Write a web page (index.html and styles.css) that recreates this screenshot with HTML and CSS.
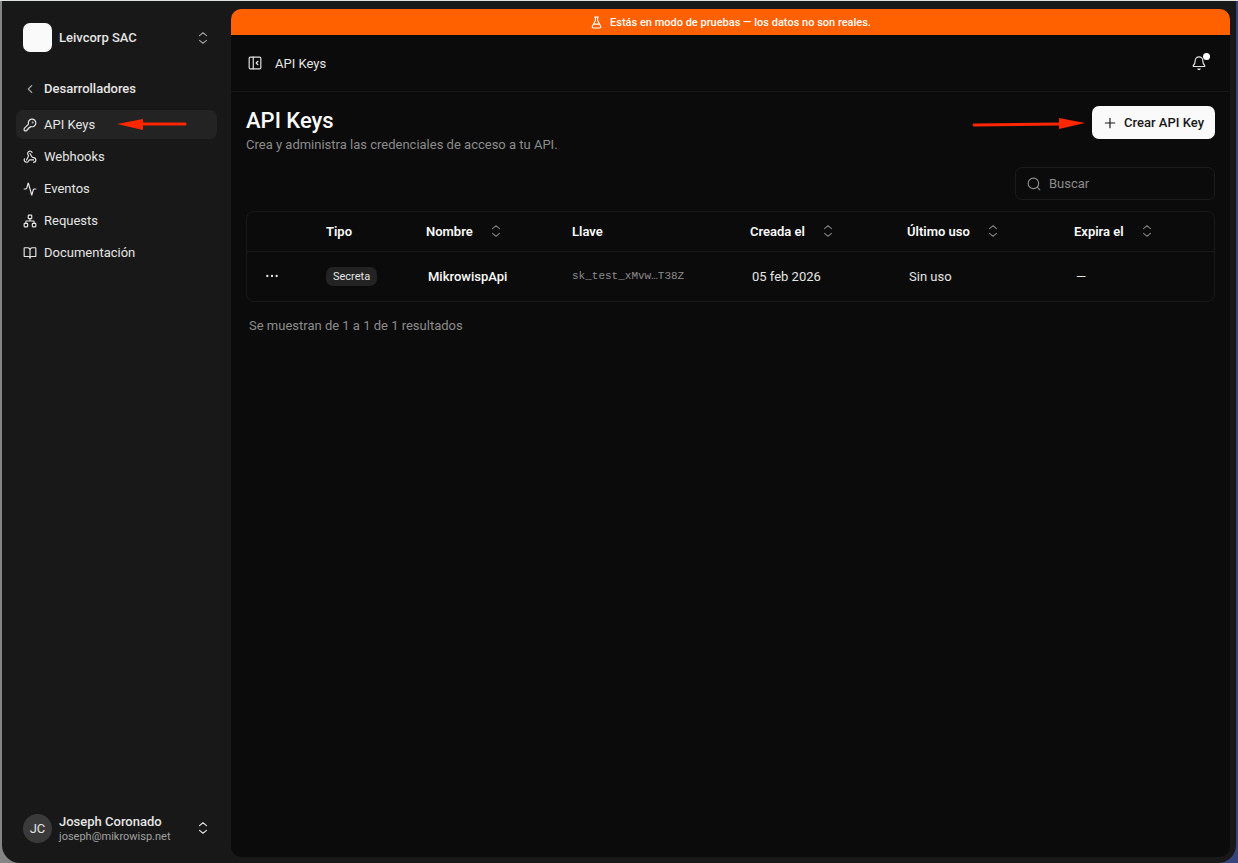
FILE: index.html
```
<!DOCTYPE html>
<html lang="es">
<head>
    <meta charset="UTF-8">
    <meta name="viewport" content="width=device-width, initial-scale=1.0">
    <title>API Keys</title>
    <link rel="stylesheet" href="styles.css">
</head>
<body>
    <!-- Shared icons -->
    <svg class="sprite" aria-hidden="true">
        <symbol id="sort" viewBox="0 0 24 24"><path d="m6 16 6 5 6-5M6 8l6-5 6 5"/></symbol>
    </svg>

    <div class="app">
        <aside class="sidebar">
            <button class="account" type="button">
                <span class="logo"></span>
                <span class="account-name">Leivcorp SAC</span>
                <svg class="icon muted"><use href="#sort"/></svg>
            </button>

            <a class="back" href="#">
                <svg class="icon muted" viewBox="0 0 24 24"><path d="m15 18-6-6 6-6"/></svg>
                Desarrolladores
            </a>

            <nav class="nav">
                <a class="nav-item active" href="#">
                    <svg class="icon" viewBox="0 0 24 24"><path d="M2.586 17.414A2 2 0 0 0 2 18.828V21a1 1 0 0 0 1 1h3a1 1 0 0 0 1-1v-1a1 1 0 0 1 1-1h1a1 1 0 0 0 1-1v-1a1 1 0 0 1 1-1h.172a2 2 0 0 0 1.414-.586l.814-.814a6.5 6.5 0 1 0-4-4z"/><circle cx="16.5" cy="7.5" r=".5"/></svg>
                    API Keys
                    <svg class="arrow arrow-left" viewBox="0 0 70 12"><path class="line" d="M26 6h42"/><path class="head" d="M0 6 26 1v11z"/></svg>
                </a>
                <a class="nav-item" href="#">
                    <svg class="icon" viewBox="0 0 24 24"><path d="M18 16.98h-5.99c-1.1 0-1.95.94-2.48 1.9A4 4 0 0 1 2 17c.01-.7.2-1.4.57-2"/><path d="m6 17 3.13-5.78c.53-.97.1-2.18-.5-3.1a4 4 0 1 1 6.89-4.06"/><path d="m12 6 3.13 5.73C15.66 12.7 16.9 13 18 13a4 4 0 0 1 0 8"/></svg>
                    Webhooks
                </a>
                <a class="nav-item" href="#">
                    <svg class="icon" viewBox="0 0 24 24"><path d="M22 12h-2.48a2 2 0 0 0-1.93 1.46l-2.35 8.36a.25.25 0 0 1-.48 0L9.24 2.18a.25.25 0 0 0-.48 0l-2.35 8.36A2 2 0 0 1 4.49 12H2"/></svg>
                    Eventos
                </a>
                <a class="nav-item" href="#">
                    <svg class="icon" viewBox="0 0 24 24"><rect x="16" y="16" width="6" height="6" rx="1"/><rect x="2" y="16" width="6" height="6" rx="1"/><rect x="9" y="2" width="6" height="6" rx="1"/><path d="M5 16v-3a1 1 0 0 1 1-1h12a1 1 0 0 1 1 1v3M12 12V8"/></svg>
                    Requests
                </a>
                <a class="nav-item" href="#">
                    <svg class="icon" viewBox="0 0 24 24"><path d="M12 7v14M3 18a1 1 0 0 1-1-1V4a1 1 0 0 1 1-1h5a4 4 0 0 1 4 4 4 4 0 0 1 4-4h5a1 1 0 0 1 1 1v13a1 1 0 0 1-1 1h-6a3 3 0 0 0-3 3 3 3 0 0 0-3-3z"/></svg>
                    Documentación
                </a>
            </nav>

            <button class="account user" type="button">
                <span class="avatar">JC</span>
                <span class="account-name">Joseph Coronado<small>joseph@mikrowisp.net</small></span>
                <svg class="icon"><use href="#sort"/></svg>
            </button>
        </aside>

        <main class="panel">
            <div class="banner">
                <svg class="icon" viewBox="0 0 24 24"><path d="M14 2v6a2 2 0 0 0 .245.96l5.51 10.08A2 2 0 0 1 18 22H6a2 2 0 0 1-1.755-2.96l5.51-10.08A2 2 0 0 0 10 8V2M6.453 15h11.094M8.5 2h7"/></svg>
                Estás en modo de pruebas — los datos no son reales.
            </div>

            <header class="topbar">
                <button class="icon-btn" type="button" aria-label="Contraer menú">
                    <svg class="icon" viewBox="0 0 24 24"><rect x="2" y="2" width="20" height="20" rx="2"/><path d="M9 2v20M17 15l-3-3 3-3"/></svg>
                </button>
                <span>API Keys</span>
                <button class="icon-btn bell" type="button" aria-label="Notificaciones">
                    <svg class="icon" viewBox="0 0 24 24"><path d="M10.268 22a2 2 0 0 0 3.464 0M2.262 16.326A1 1 0 0 0 3 18h18a1 1 0 0 0 .74-1.673C20.41 14.956 18.500 13 18.500 8A6.500 6.500 0 0 0 5.500 8c0 5-1.911 6.956-3.238 8.326"/></svg>
                    <span class="dot"></span>
                </button>
            </header>

            <section class="content">
                <div class="heading">
                    <div>
                        <h1>API Keys</h1>
                        <p>Crea y administra las credenciales de acceso a tu API.</p>
                    </div>
                    <div class="create">
                        <svg class="arrow arrow-right" viewBox="0 0 113 12"><path class="line" d="m2 7 86-1"/><path class="head" d="M113 5 87 0v11z"/></svg>
                        <button class="create-btn" type="button">
                            <svg class="icon" viewBox="0 0 24 24"><path d="M4 12h16M12 4v16"/></svg>
                            Crear API Key
                        </button>
                    </div>
                </div>

                <label class="search">
                    <svg class="icon" viewBox="0 0 24 24"><circle cx="11" cy="11" r="9"/><path d="m22 22-4.6-4.6"/></svg>
                    <input type="search" placeholder="Buscar" aria-label="Buscar">
                </label>

                <div class="table-box">
                    <table>
                        <colgroup>
                            <col class="col-menu">
                            <col class="col-type">
                            <col class="col-name">
                            <col class="col-key">
                            <col class="col-created">
                            <col class="col-used">
                            <col class="col-expires">
                        </colgroup>
                        <thead>
                            <tr>
                                <th></th>
                                <th>Tipo</th>
                                <th><button class="sort-btn" type="button">Nombre <svg class="icon"><use href="#sort"/></svg></button></th>
                                <th>Llave</th>
                                <th><button class="sort-btn" type="button">Creada el <svg class="icon"><use href="#sort"/></svg></button></th>
                                <th><button class="sort-btn" type="button">Último uso <svg class="icon"><use href="#sort"/></svg></button></th>
                                <th><button class="sort-btn" type="button">Expira el <svg class="icon"><use href="#sort"/></svg></button></th>
                            </tr>
                        </thead>
                        <tbody>
                            <tr>
                                <td class="menu-cell">
                                    <button class="icon-btn" type="button" aria-label="Acciones">
                                        <svg class="icon" viewBox="0 0 24 24"><circle cx="4" cy="12" r="1"/><circle cx="12" cy="12" r="1"/><circle cx="20" cy="12" r="1"/></svg>
                                    </button>
                                </td>
                                <td><span class="badge">Secreta</span></td>
                                <td class="value name">MikrowispApi</td>
                                <td class="key">sk_test_xMvw…T38Z</td>
                                <td class="value">05 feb 2026</td>
                                <td class="value">Sin uso</td>
                                <td class="value">—</td>
                            </tr>
                        </tbody>
                    </table>
                </div>

                <p class="summary">Se muestran de 1 a 1 de 1 resultados</p>
            </section>
        </main>
    </div>
</body>
</html>
```
FILE: styles.css
```
/* Base styles */
* {
    box-sizing: border-box;
}

body {
    margin: 0;
    padding: 0 2px;
    height: 100vh;
    border-top: 1px solid #dfe3e1;
    background: linear-gradient(90deg, #858585, #4b5052 40%, #303040 60%, #35457c);
    font-family: Roboto, "Liberation Sans", sans-serif;
    font-size: 13px;
    line-height: 17px;
    color: #e5e5e5;
}

h1, p {
    margin: 0;
}

a {
    color: inherit;
    text-decoration: none;
}

button {
    padding: 0;
    border: 0;
    background: none;
    font: inherit;
    color: inherit;
    text-align: left;
    cursor: pointer;
}

.sprite {
    position: absolute;
    width: 0;
    height: 0;
}

.icon {
    width: 14px;
    height: 14px;
    flex: none;
    fill: none;
    stroke: currentColor;
    stroke-width: 2;
    stroke-linecap: round;
    stroke-linejoin: round;
}

.muted {
    color: #a1a1a1;
}

.app {
    display: flex;
    height: 100%;
    padding: 8px 6px 6px 0;
    background: #181818;
    border-radius: 0 0 18px 18px;
}

/* Sidebar */
.sidebar {
    display: flex;
    flex-direction: column;
    flex: none;
    width: 229px;
    padding: 14px;
}

.account {
    display: flex;
    align-items: center;
    gap: 7px;
    padding: 0 7px;
    font-weight: 500;
}

.account-name {
    flex: 1;
}

.account-name small {
    display: block;
    font-size: 11px;
    line-height: 13px;
    font-weight: 400;
    color: #a1a1a1;
}

.logo, .avatar {
    width: 29px;
    height: 29px;
    border-radius: 7px;
    background: #fafafa;
}

.avatar {
    display: flex;
    align-items: center;
    justify-content: center;
    border-radius: 50%;
    background: #3a3a3a;
    font-weight: 400;
}

.user {
    margin-top: auto;
}

.back {
    display: flex;
    align-items: center;
    gap: 7px;
    margin-top: 28px;
    padding: 0 7px;
    font-weight: 500;
}

.nav {
    display: flex;
    flex-direction: column;
    gap: 3px;
    margin-top: 13px;
}

.nav-item {
    position: relative;
    display: flex;
    align-items: center;
    gap: 7px;
    height: 29px;
    padding: 0 7px;
    border-radius: 7px;
}

.active {
    background: #232323;
}

/* Annotation arrows */
.arrow {
    position: absolute;
    height: 12px;
}

.arrow .line {
    fill: none;
    stroke: #ff2600;
    stroke-width: 3;
    stroke-linecap: round;
}

.arrow .head {
    fill: #ff2600;
}

.arrow-left {
    left: 101px;
    top: 8px;
    width: 70px;
}

.arrow-right {
    right: 130px;
    top: 12px;
    width: 113px;
}

/* Main panel */
.panel {
    flex: 1;
    min-width: 0;
    border-radius: 10px;
    background: #0b0b0b;
    overflow: hidden;
}

.banner {
    display: flex;
    align-items: center;
    justify-content: center;
    gap: 7px;
    height: 26px;
    background: #ff6000;
    color: #fff;
    font-size: 11px;
    font-weight: 500;
}

.banner .icon {
    width: 13px;
    height: 13px;
}

.topbar {
    display: flex;
    align-items: center;
    gap: 13px;
    height: 57px;
    padding: 0 24px 0 17px;
    border-bottom: 1px solid #161616;
}

.icon-btn {
    display: flex;
    position: relative;
}

.bell {
    margin-left: auto;
}

.dot {
    position: absolute;
    top: -3px;
    right: -4px;
    width: 7px;
    height: 7px;
    border-radius: 50%;
    background: #fff;
}

.content {
    padding: 14px 15px;
}

.heading {
    display: flex;
    justify-content: space-between;
}

h1 {
    font-size: 22px;
    line-height: 30px;
    font-weight: 500;
    color: #fafafa;
}

.heading p {
    line-height: 17px;
    color: #8c8c8c;
}

.create {
    position: relative;
}

.create-btn {
    display: flex;
    align-items: center;
    gap: 7px;
    height: 33px;
    padding: 0 11px;
    border-radius: 7px;
    background: #fafafa;
    color: #171717;
    font-weight: 500;
}

.search {
    display: flex;
    align-items: center;
    gap: 8px;
    width: 200px;
    height: 33px;
    margin: 14px 0 11px auto;
    padding: 0 11px;
    border: 1px solid #1c1c1c;
    border-radius: 7px;
    color: #8c8c8c;
}

.search input {
    flex: 1;
    min-width: 0;
    padding: 0;
    border: 0;
    outline: 0;
    background: none;
    font: inherit;
    color: #e5e5e5;
}

.search input::placeholder {
    color: #8c8c8c;
    opacity: 1;
}

/* Table */
.table-box {
    border: 1px solid #191919;
    border-radius: 8px;
}

table {
    width: 100%;
    table-layout: fixed;
    border-collapse: collapse;
}

.col-menu { width: 71px; }
.col-type { width: 100px; }
.col-name { width: 146px; }
.col-key { width: 178px; }
.col-created { width: 157px; }
.col-used { width: 167px; }
.col-expires { width: 148px; }

th, td {
    padding: 0 8px;
    text-align: left;
    white-space: nowrap;
}

th {
    height: 39px;
    border-bottom: 1px solid #191919;
    font-weight: 600;
    color: #fafafa;
}

td {
    height: 50px;
}

.sort-btn {
    display: flex;
    align-items: center;
    gap: 16px;
}

.sort-btn .icon {
    color: #7c7c7c;
}

.menu-cell {
    padding-left: 18px;
}

.value {
    padding-left: 10px;
}

.name {
    font-weight: 500;
    color: #fafafa;
}

.badge {
    display: inline-block;
    padding: 1px 7px;
    border-radius: 7px;
    background: #232323;
    font-size: 11px;
}

.key {
    font-family: "Liberation Mono", monospace;
    font-size: 11px;
    color: #8c8c8c;
}

.summary {
    margin: 15px 3px 0;
    color: #8c8c8c;
}
```
